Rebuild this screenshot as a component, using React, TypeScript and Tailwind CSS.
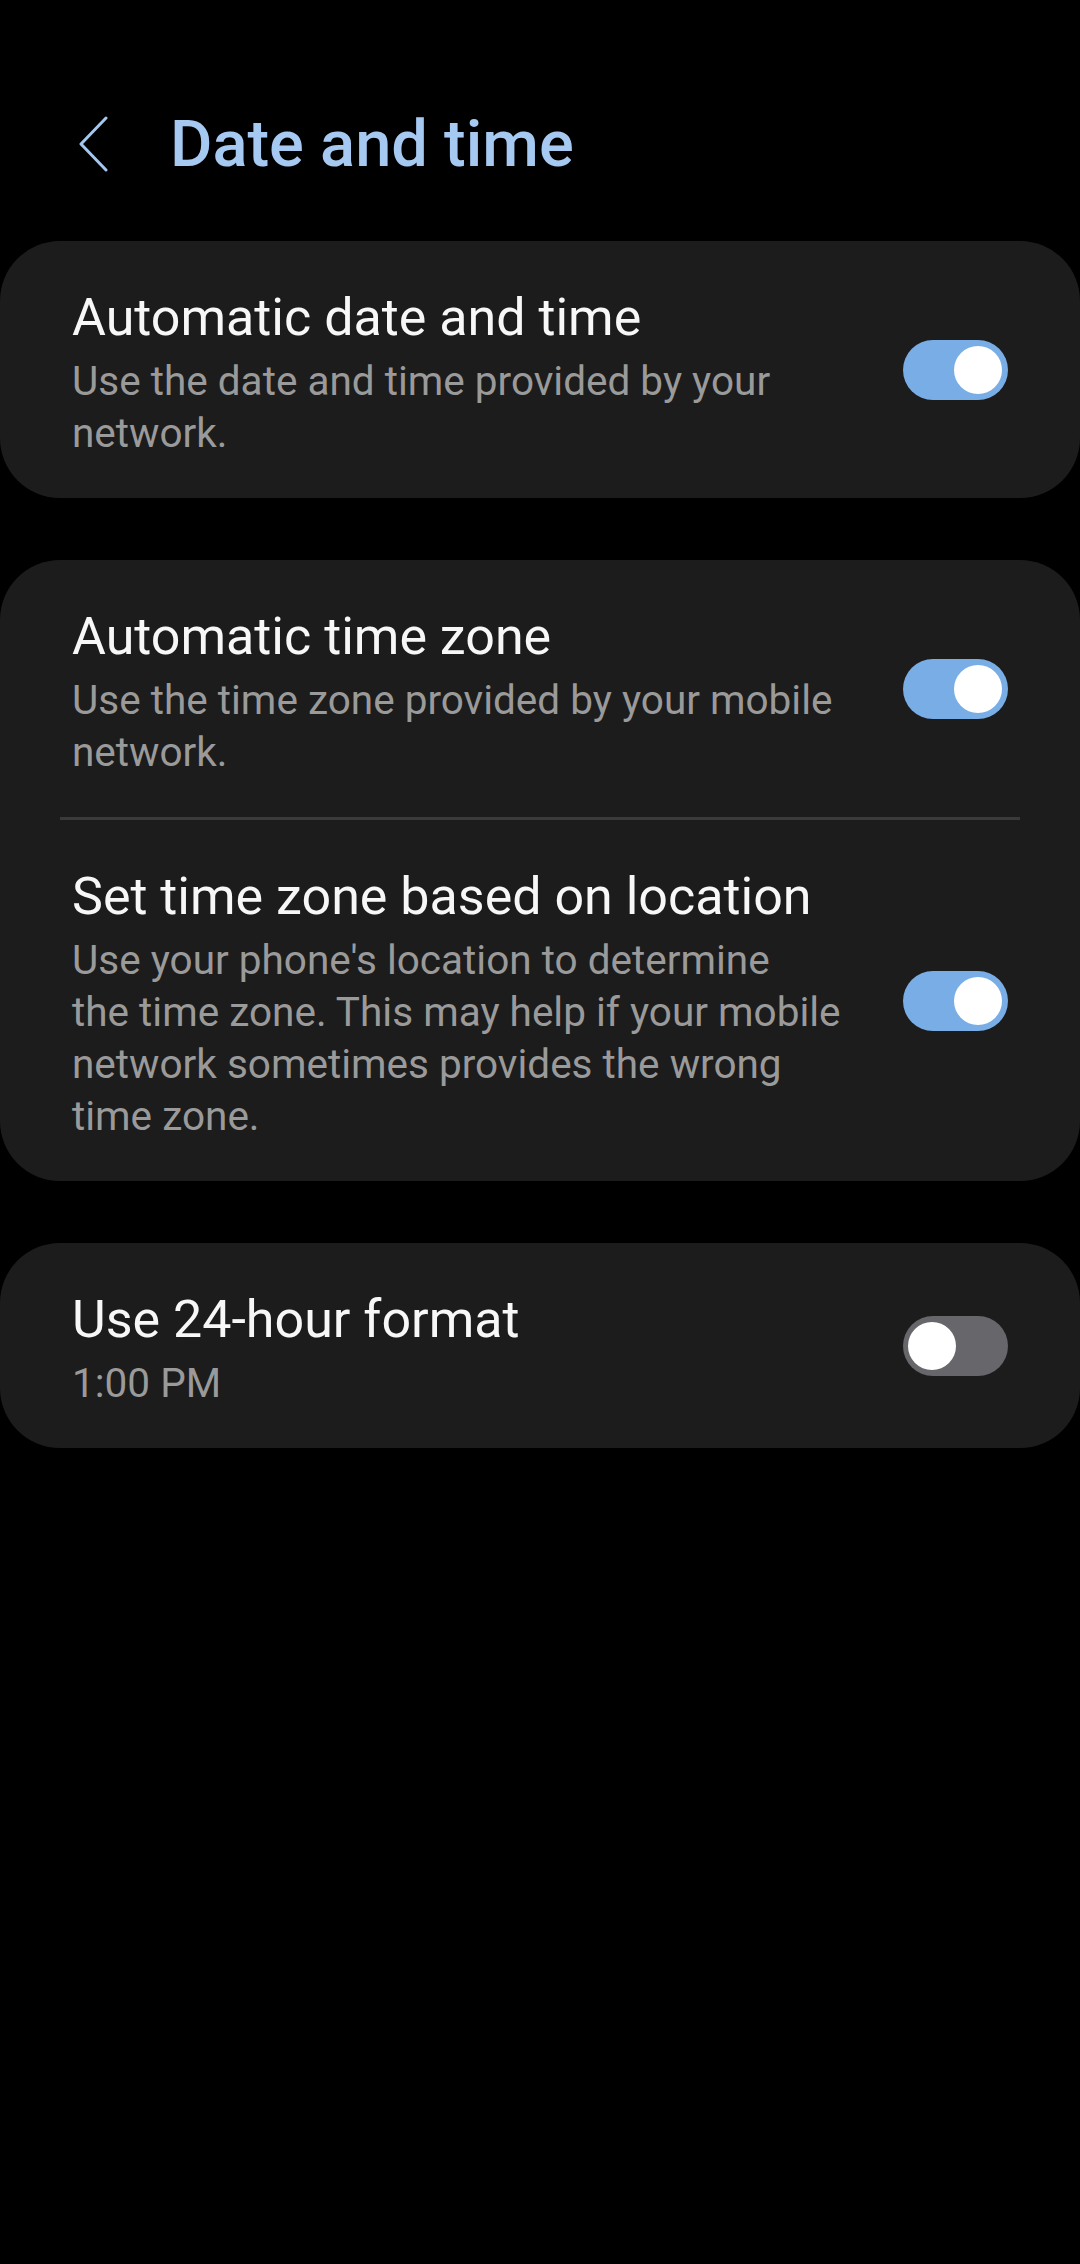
import React from "react";

type Row = {
	title: string;
	lines: string[];
	on: boolean;
};

const cards: Row[][] = [
	[
		{
			title: "Automatic date and time",
			lines: ["Use the date and time provided by your", "network."],
			on: true,
		},
	],
	[
		{
			title: "Automatic time zone",
			lines: ["Use the time zone provided by your mobile", "network."],
			on: true,
		},
		{
			title: "Set time zone based on location",
			lines: [
				"Use your phone's location to determine",
				"the time zone. This may help if your mobile",
				"network sometimes provides the wrong",
				"time zone.",
			],
			on: true,
		},
	],
	[{ title: "Use 24-hour format", lines: ["1:00 PM"], on: false }],
];

// 스위치
function Toggle({ on }: { on: boolean }) {
	return (
		<div
			className={`relative w-[105px] h-[60px] shrink-0 rounded-full ${
				on ? "bg-[#79ade6]" : "bg-[#67676b]"
			}`}
		>
			<div
				className={`absolute top-[6px] w-[48px] h-[48px] rounded-full bg-white ${
					on ? "right-[6px]" : "left-[5px]"
				}`}
			/>
		</div>
	);
}

function SettingRow({ row }: { row: Row }) {
	return (
		<div className="flex items-center pl-[72px] pr-[72px]">
			<div className="flex-1 pt-[47px] pb-[39px]">
				<p className="text-[52px] leading-[60px] text-[#f7f7f7]">{row.title}</p>
				<p className="mt-[7px] text-[40.5px] leading-[52px] text-[#9a9a9a] whitespace-pre-line">
					{row.lines.join("\n")}
				</p>
			</div>
			<Toggle on={row.on} />
		</div>
	);
}

export default function App() {
	return (
		<div
			className="w-[1080px] h-[2264px] bg-black pt-[110px]"
			style={{ fontFamily: "Roboto, 'Noto Sans', sans-serif" }}
		>
			{/* 상단 헤더 */}
			<div className="flex items-center h-[68px] pl-[78px]">
				<svg width="31" height="56" viewBox="0 0 31 56" fill="none">
					<path
						d="M28 2 L3 28 L28 54"
						stroke="#a3c7ef"
						strokeWidth="3"
						strokeLinecap="round"
						strokeLinejoin="round"
					/>
				</svg>
				<h1 className="ml-[61px] text-[65px] font-medium text-[#a6c9f1] leading-[68px]">
					Date and time
				</h1>
			</div>

			<div className="flex flex-col gap-[62px] mt-[63px]">
				{cards.map((card, i) => (
					<div key={i} className="bg-[#1c1c1c] rounded-[60px]">
						{card.map((row, j) => (
							<div key={row.title}>
								{j > 0 && <div className="mx-[60px] h-[3px] bg-[#3a3a3a]" />}
								<SettingRow row={row} />
							</div>
						))}
					</div>
				))}
			</div>
		</div>
	);
}
